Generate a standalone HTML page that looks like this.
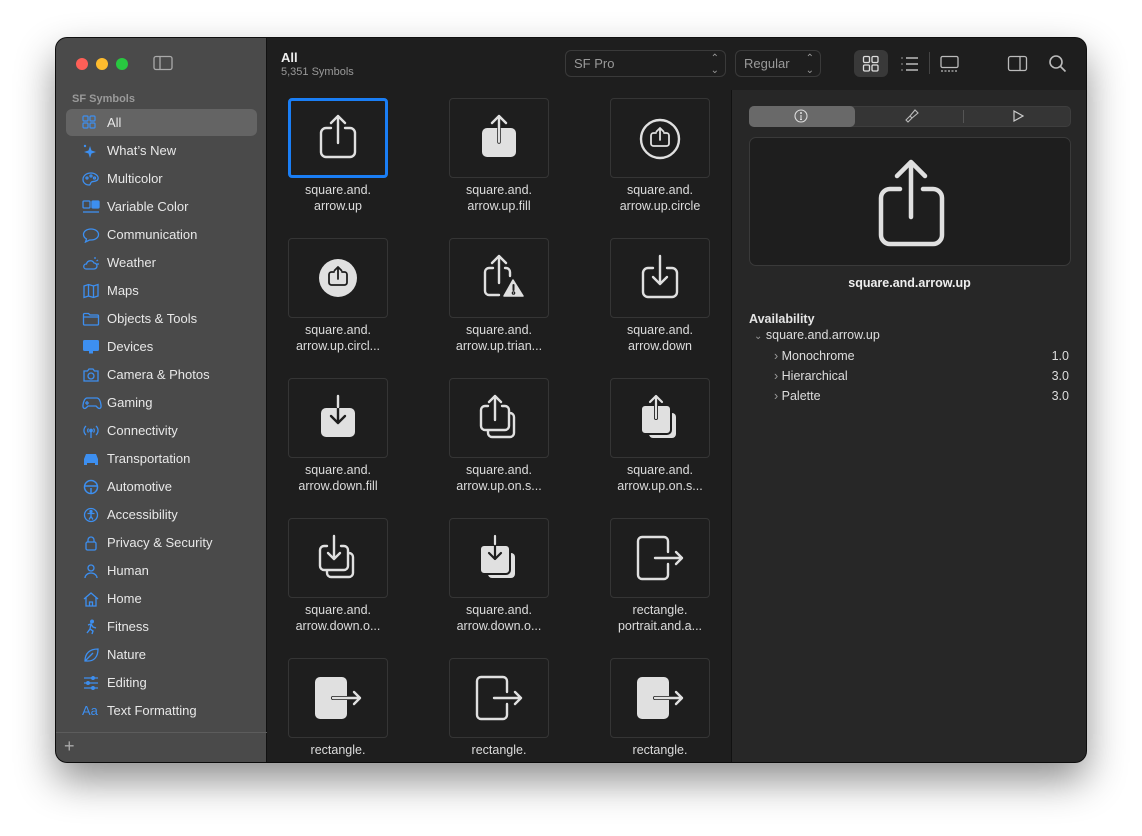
<!DOCTYPE html>
<html><head><meta charset="utf-8"><style>
*{margin:0;padding:0;box-sizing:border-box}
body{width:1142px;height:836px;background:#fff;font-family:"Liberation Sans",sans-serif;position:relative;overflow:hidden}
.win{position:absolute;left:56px;top:38px;width:1030px;height:724px;border-radius:11px;overflow:hidden;background:#1e1e1e;box-shadow:0 18px 40px rgba(0,0,0,.45),0 0 0 1px #111}
.side{position:absolute;left:0;top:0;width:211px;height:724px;background:#4a4a4a;border-right:1px solid #111}
.abs{position:absolute}
.tl{position:absolute;top:20px;width:12px;height:12px;border-radius:50%}
.sec{position:absolute;left:16px;top:55px;font-size:11px;font-weight:bold;color:#9a9a9a}
.item{position:absolute;left:10px;width:191px;height:27px;font-size:13px;color:#e8e8e8;line-height:27px;padding-left:41px}
.item.sel{background:#646464;border-radius:6px}
.item svg{position:absolute;left:16px;top:6px}
.main{position:absolute;left:211px;top:0;width:464px;height:724px;background:#1e1e1e}
.cell{position:absolute;width:100px;height:80px;border:1px solid #353535;border-radius:4px}
.cell svg{position:absolute;left:-1px;top:-1px}
.lbl{position:absolute;width:160px;text-align:center;font-size:12.5px;color:#dcdcdc;line-height:16px}
.right{position:absolute;left:675px;top:52px;width:355px;height:672px;background:#272727;border-left:1px solid #111}
.pop{position:absolute;top:12px;height:27px;border:1px solid #3a3a3a;border-radius:6px;font-size:13px;color:#9a9a9a;line-height:25px;padding-left:8px}
</style></head><body>
<div class="win">
<div class="main">
 <div class="abs" style="left:14px;top:12px;font-size:13px;font-weight:bold;color:#eee">All</div>
 <div class="abs" style="left:14px;top:28px;font-size:11px;color:#999">5,351 Symbols</div>
</div>
<div class="side">
 <div class="tl" style="left:20px;background:#fe5f57"></div>
 <div class="tl" style="left:40px;background:#febc2e"></div>
 <div class="tl" style="left:60px;background:#28c840"></div>
 <svg class="abs" style="left:97px;top:17px" width="20" height="16"><rect x="1" y="1.5" width="18" height="13" rx="2" fill="none" stroke="#aaa" stroke-width="1.3"/><line x1="7" y1="2" x2="7" y2="14" stroke="#aaa" stroke-width="1.3"/></svg>
 <div class="sec">SF Symbols</div>
 <div class="item sel" style="top:71px"><svg width="14" height="14" fill="none" stroke="#3d8ff0" stroke-width="1.2"><rect x="1" y="1" width="5" height="5" rx="1"/><rect x="8" y="1" width="5" height="5" rx="1"/><rect x="1" y="8" width="5" height="5" rx="1"/><rect x="8" y="8" width="5" height="5" rx="1"/></svg>All</div>
 <div class="item" style="top:99px"><svg width="16" height="16" fill="#3d8ff0"><path d="M8 3L9.5 7.5 14 9 9.5 10.5 8 15 6.5 10.5 2 9 6.5 7.5Z"/><circle cx="3" cy="3" r="1.2"/></svg>What’s New</div>
 <div class="item" style="top:127px"><svg width="18" height="16" fill="none" stroke="#3d8ff0" stroke-width="1.3"><path d="M9 2C4 2 1 5 1 8.5S4 14 7 14c2 0 1-2 2.5-3S15 11 16 8 13 2 9 2Z"/><circle cx="5" cy="7" r="1"/><circle cx="9" cy="5" r="1"/><circle cx="12.5" cy="7" r="1"/></svg>Multicolor</div>
 <div class="item" style="top:155px"><svg width="18" height="16" fill="none" stroke="#3d8ff0" stroke-width="1.3"><rect x="1" y="2" width="7" height="7" rx="1"/><rect x="10" y="2" width="7" height="7" rx="1" fill="#3d8ff0"/><line x1="1" y1="13" x2="17" y2="13"/></svg>Variable Color</div>
 <div class="item" style="top:183px"><svg width="18" height="16" fill="none" stroke="#3d8ff0" stroke-width="1.3"><path d="M9 2C4.5 2 1.5 4.5 1.5 7.5c0 2 1.2 3.5 3 4.4L3.5 15 7.5 13C8 13 8.5 13 9 13c4.5 0 7.5-2.5 7.5-5.5S13.5 2 9 2Z"/></svg>Communication</div>
 <div class="item" style="top:211px"><svg width="18" height="16" fill="none" stroke="#3d8ff0" stroke-width="1.3"><path d="M4 14h8a3 3 0 0 0 0-6 4 4 0 0 0-7.5 1A2.5 2.5 0 0 0 4 14Z"/><path d="M13 2v2M16 5l-1.5 1M17 9h-2"/></svg>Weather</div>
 <div class="item" style="top:239px"><svg width="18" height="16" fill="none" stroke="#3d8ff0" stroke-width="1.3"><path d="M2 3l4.5-1.5 5 1.5 4.5-1.5v11.5l-4.5 1.5-5-1.5L2 14.5Z M6.5 1.5v11.5 M11.5 3v11.5"/></svg>Maps</div>
 <div class="item" style="top:267px"><svg width="18" height="16" fill="none" stroke="#3d8ff0" stroke-width="1.3"><path d="M1.5 3.5a1 1 0 0 1 1-1h4l1.5 1.5h7.5a1 1 0 0 1 1 1V13a1 1 0 0 1-1 1h-13a1 1 0 0 1-1-1Z M1.5 6h15"/></svg>Objects &amp; Tools</div>
 <div class="item" style="top:295px"><svg width="18" height="16" fill="#3d8ff0"><rect x="1" y="1" width="16" height="11" rx="1.5"/><rect x="7" y="12" width="4" height="2.5"/></svg>Devices</div>
 <div class="item" style="top:323px"><svg width="18" height="16" fill="none" stroke="#3d8ff0" stroke-width="1.3"><path d="M2 4h3.5l1.5-2h4l1.5 2H16v10H2Z"/><circle cx="9" cy="9" r="3"/></svg>Camera &amp; Photos</div>
 <div class="item" style="top:351px"><svg width="20" height="16" fill="none" stroke="#3d8ff0" stroke-width="1.3"><path d="M5 3h10c2 0 3.5 3 4 7s-2 4-3.5 2.5L14 11H6l-1.5 1.5C3 14 0.5 14 1 10s2-7 4-7Z M5 6v4M3 8h4"/></svg>Gaming</div>
 <div class="item" style="top:379px"><svg width="18" height="16" fill="none" stroke="#3d8ff0" stroke-width="1.3"><path d="M9 8v7M4 3a6 6 0 0 0 0 9M14 3a6 6 0 0 1 0 9M6.5 5.5a3 3 0 0 0 0 4M11.5 5.5a3 3 0 0 1 0 4"/><circle cx="9" cy="7.5" r="1.2" fill="#3d8ff0"/></svg>Connectivity</div>
 <div class="item" style="top:407px"><svg width="18" height="16" fill="#3d8ff0"><path d="M4 3h10l2 5v6h-3v-2H5v2H2V8Z"/></svg>Transportation</div>
 <div class="item" style="top:435px"><svg width="18" height="16" fill="none" stroke="#3d8ff0" stroke-width="1.5"><circle cx="9" cy="8" r="6.5"/><path d="M3 7h12M9 9v5"/></svg>Automotive</div>
 <div class="item" style="top:463px"><svg width="18" height="16" fill="none" stroke="#3d8ff0" stroke-width="1.3"><circle cx="9" cy="8" r="6.5"/><circle cx="9" cy="4.5" r="1" fill="#3d8ff0"/><path d="M5.5 6.5h7M9 6.5v3l-2 3M9 9.5l2 3"/></svg>Accessibility</div>
 <div class="item" style="top:491px"><svg width="18" height="16" fill="none" stroke="#3d8ff0" stroke-width="1.3"><rect x="4" y="7" width="10" height="8" rx="1.5"/><path d="M6 7V5a3 3 0 0 1 6 0v2"/></svg>Privacy &amp; Security</div>
 <div class="item" style="top:519px"><svg width="18" height="16" fill="none" stroke="#3d8ff0" stroke-width="1.3"><circle cx="9" cy="5" r="3"/><path d="M3 15a6 5 0 0 1 12 0"/></svg>Human</div>
 <div class="item" style="top:547px"><svg width="18" height="16" fill="none" stroke="#3d8ff0" stroke-width="1.3"><path d="M2 8l7-6 7 6M4 6.5V15h10V6.5M7.5 15v-4h3v4"/></svg>Home</div>
 <div class="item" style="top:575px"><svg width="18" height="16" fill="none" stroke="#3d8ff0" stroke-width="1.4"><circle cx="10" cy="2.5" r="1.3" fill="#3d8ff0"/><path d="M6 6l3-1 2 3 3 1M9 5l-1 5 3 2-1 3M8 10l-3 4"/></svg>Fitness</div>
 <div class="item" style="top:603px"><svg width="18" height="16" fill="none" stroke="#3d8ff0" stroke-width="1.3"><path d="M3 14C3 6 8 2 16 2c0 8-4 12-10 12ZM3 14l8-8"/></svg>Nature</div>
 <div class="item" style="top:631px"><svg width="18" height="16" fill="none" stroke="#3d8ff0" stroke-width="1.3"><path d="M2 3h14M2 8h14M2 13h14"/><circle cx="11" cy="3" r="1.3"/><circle cx="6" cy="8" r="1.3"/><circle cx="11" cy="13" r="1.3"/></svg>Editing</div>
 <div class="item" style="top:659px"><span style="position:absolute;left:16px;color:#3d8ff0;font-size:13px">Aa</span>Text Formatting</div>
 <div class="abs" style="left:0;top:694px;width:211px;height:1px;background:#5c5c5c"></div>
 <div class="abs" style="left:8px;top:698px;font-size:18px;color:#aaa">+</div>
</div>
<!-- toolbar -->
<div class="pop" style="left:509px;width:161px;color:#999">SF Pro<span style="position:absolute;right:6px;top:0;font-size:10px;line-height:12px;top:2px">⌃<br>⌄</span></div>
<div class="pop" style="left:679px;width:86px">Regular<span style="position:absolute;right:6px;top:2px;font-size:10px;line-height:12px">⌃<br>⌄</span></div>
<div class="abs" style="left:798px;top:12px;width:34px;height:27px;background:#393939;border-radius:6px"></div>
<svg class="abs" style="left:806px;top:17px" width="18" height="18" fill="none" stroke="#ddd" stroke-width="1.3"><rect x="1.5" y="1.5" width="6" height="6" rx="1.2"/><rect x="10" y="1.5" width="6" height="6" rx="1.2"/><rect x="1.5" y="10" width="6" height="6" rx="1.2"/><rect x="10" y="10" width="6" height="6" rx="1.2"/></svg>
<svg class="abs" style="left:844px;top:18px" width="20" height="16" fill="none" stroke="#bbb" stroke-width="1.4"><path d="M6 2h12M6 8h12M6 14h12M1.5 2h1M1.5 8h1M1.5 14h1"/></svg>
<div class="abs" style="left:873px;top:14px;width:1px;height:22px;background:#444"></div>
<svg class="abs" style="left:883px;top:17px" width="22" height="18" fill="none" stroke="#bbb" stroke-width="1.3"><rect x="2" y="1.5" width="17" height="11" rx="1.5"/><path d="M2 16h17" stroke-dasharray="2 1.5"/></svg>
<svg class="abs" style="left:951px;top:17px" width="22" height="17" fill="none" stroke="#bbb" stroke-width="1.3"><rect x="1.5" y="1.5" width="18" height="14" rx="2"/><line x1="13" y1="2" x2="13" y2="15"/></svg>
<svg class="abs" style="left:992px;top:16px" width="20" height="20" fill="none" stroke="#bbb" stroke-width="1.6"><circle cx="8" cy="8" r="6"/><path d="M12.5 12.5l5 5"/></svg>

<div class="main" style="background:transparent;top:0;pointer-events:none">
<!-- row1 -->
<div class="cell" style="left:21px;top:60px;border:3px solid #1a7ef5;"><svg width="100" height="80" style="left:-3px;top:-3px" fill="none" stroke="#e0e0e0" stroke-width="2.4" stroke-linecap="round" stroke-linejoin="round"><path d="M43 30h-5a5 5 0 0 0-5 5v19a5 5 0 0 0 5 5h24a5 5 0 0 0 5-5V35a5 5 0 0 0-5-5h-5M50 45V18M43 25l7-7 7 7"/></svg></div>
<div class="cell" style="left:182px;top:60px"><svg width="100" height="80" stroke-linecap="round" stroke-linejoin="round"><rect x="33" y="30" width="34" height="29" rx="5" fill="#e0e0e0"/><path d="M50 44V18M43 25l7-7 7 7" fill="none" stroke="#e0e0e0" stroke-width="2.4"/><path d="M50 44V31" stroke="#1e1e1e" stroke-width="3.5"/><path d="M50 44V18" stroke="#e0e0e0" stroke-width="2"/></svg></div>
<div class="cell" style="left:343px;top:60px"><svg width="100" height="80" fill="none" stroke="#e0e0e0" stroke-linecap="round" stroke-linejoin="round"><circle cx="50" cy="41" r="19" stroke-width="2.4"/><path d="M46 35h-2.5a2.5 2.5 0 0 0-2.5 2.5v8a2.5 2.5 0 0 0 2.5 2.5h13a2.5 2.5 0 0 0 2.5-2.5v-8a2.5 2.5 0 0 0-2.5-2.5H54M50 42V30M46.5 33.5l3.5-3.5 3.5 3.5" stroke-width="1.8"/></svg></div>
<!-- row2 -->
<div class="cell" style="left:21px;top:200px"><svg width="100" height="80" fill="none" stroke-linecap="round" stroke-linejoin="round"><circle cx="50" cy="40" r="19" fill="#e0e0e0"/><path d="M46 34h-2.5a2.5 2.5 0 0 0-2.5 2.5v8a2.5 2.5 0 0 0 2.5 2.5h13a2.5 2.5 0 0 0 2.5-2.5v-8a2.5 2.5 0 0 0-2.5-2.5H54M50 41V29M46.5 32.5l3.5-3.5 3.5 3.5" stroke="#1e1e1e" stroke-width="1.8"/></svg></div>
<div class="cell" style="left:182px;top:200px"><svg width="100" height="80" fill="none" stroke="#e0e0e0" stroke-width="2.4" stroke-linecap="round" stroke-linejoin="round"><path d="M44 30h-4a4 4 0 0 0-4 4v19a4 4 0 0 0 4 4h10M56 30h1a4 4 0 0 1 4 4v4M50 45V18M43 25l7-7 7 7"/><path d="M64 42l10 16H55Z" fill="#e0e0e0" stroke-width="1.5"/><path d="M64.5 47v5" stroke="#1e1e1e" stroke-width="2"/><circle cx="64.5" cy="55" r=".6" stroke="#1e1e1e"/></svg></div>
<div class="cell" style="left:343px;top:200px"><svg width="100" height="80" fill="none" stroke="#e0e0e0" stroke-width="2.4" stroke-linecap="round" stroke-linejoin="round"><path d="M43 30h-5a5 5 0 0 0-5 5v19a5 5 0 0 0 5 5h24a5 5 0 0 0 5-5V35a5 5 0 0 0-5-5h-5M50 18v28M43 39l7 7 7-7"/></svg></div>
<!-- row3 -->
<div class="cell" style="left:21px;top:340px"><svg width="100" height="80" stroke-linecap="round" stroke-linejoin="round"><rect x="33" y="30" width="34" height="29" rx="5" fill="#e0e0e0"/><path d="M50 18v27M43 38l7 7 7-7" fill="none" stroke="#1e1e1e" stroke-width="2.4"/><path d="M50 18v11" stroke="#e0e0e0" stroke-width="2.4"/></svg></div>
<div class="cell" style="left:182px;top:340px"><svg width="100" height="80" fill="none" stroke="#e0e0e0" stroke-width="2.4" stroke-linecap="round" stroke-linejoin="round"><path d="M39 28h-3a4 4 0 0 0-4 4v16a4 4 0 0 0 4 4h20a4 4 0 0 0 4-4V32a4 4 0 0 0-4-4h-3M46 42V18M40 24l6-6 6 6M60 35h1a4 4 0 0 1 4 4v16a4 4 0 0 1-4 4H43a4 4 0 0 1-4-4v-3"/></svg></div>
<div class="cell" style="left:343px;top:340px"><svg width="100" height="80" stroke-linecap="round" stroke-linejoin="round"><rect x="39" y="35" width="27" height="25" rx="4" fill="#e0e0e0"/><rect x="31" y="27" width="30" height="29" rx="4" fill="#e0e0e0" stroke="#1e1e1e" stroke-width="2"/><path d="M46 40V18" stroke="#1e1e1e" stroke-width="4"/><path d="M46 40V18M40 24l6-6 6 6" fill="none" stroke="#e0e0e0" stroke-width="2.2"/></svg></div>
<!-- row4 -->
<div class="cell" style="left:21px;top:480px"><svg width="100" height="80" fill="none" stroke="#e0e0e0" stroke-width="2.4" stroke-linecap="round" stroke-linejoin="round"><path d="M39 28h-3a4 4 0 0 0-4 4v16a4 4 0 0 0 4 4h20a4 4 0 0 0 4-4V32a4 4 0 0 0-4-4h-3M46 18v23M40 35l6 6 6-6M60 35h1a4 4 0 0 1 4 4v16a4 4 0 0 1-4 4H43a4 4 0 0 1-4-4v-3"/></svg></div>
<div class="cell" style="left:182px;top:480px"><svg width="100" height="80" stroke-linecap="round" stroke-linejoin="round"><rect x="39" y="35" width="27" height="25" rx="4" fill="#e0e0e0"/><rect x="31" y="27" width="30" height="29" rx="4" fill="#e0e0e0" stroke="#1e1e1e" stroke-width="2"/><path d="M46 18v23M40 35l6 6 6-6" fill="none" stroke="#1e1e1e" stroke-width="2.2"/><path d="M46 18v8" stroke="#e0e0e0" stroke-width="2.2"/></svg></div>
<div class="cell" style="left:343px;top:480px"><svg width="100" height="80" fill="none" stroke="#e0e0e0" stroke-width="2.4" stroke-linecap="round" stroke-linejoin="round"><path d="M58 34v-11a4 4 0 0 0-4-4H32a4 4 0 0 0-4 4v34a4 4 0 0 0 4 4h22a4 4 0 0 0 4-4V46M45 40h27M66 34l6 6-6 6"/></svg></div>
<!-- row5 -->
<div class="cell" style="left:21px;top:620px"><svg width="100" height="80" stroke-linecap="round" stroke-linejoin="round"><rect x="27" y="19" width="32" height="42" rx="5" fill="#e0e0e0"/><path d="M45 40h14" stroke="#1e1e1e" stroke-width="4"/><path d="M45 40h27M66 34l6 6-6 6" fill="none" stroke="#e0e0e0" stroke-width="2.4"/></svg></div>
<div class="cell" style="left:182px;top:620px"><svg width="100" height="80" fill="none" stroke="#e0e0e0" stroke-width="2.4" stroke-linecap="round" stroke-linejoin="round"><path d="M58 34v-11a4 4 0 0 0-4-4H32a4 4 0 0 0-4 4v34a4 4 0 0 0 4 4h22a4 4 0 0 0 4-4V46M45 40h27M66 34l6 6-6 6"/></svg></div>
<div class="cell" style="left:343px;top:620px"><svg width="100" height="80" stroke-linecap="round" stroke-linejoin="round"><rect x="27" y="19" width="32" height="42" rx="5" fill="#e0e0e0"/><path d="M45 40h14" stroke="#1e1e1e" stroke-width="4"/><path d="M45 40h27M66 34l6 6-6 6" fill="none" stroke="#e0e0e0" stroke-width="2.4"/></svg></div>
<!-- labels -->
<div class="lbl" style="left:-9px;top:144px">square.and.<br>arrow.up</div>
<div class="lbl" style="left:152px;top:144px">square.and.<br>arrow.up.fill</div>
<div class="lbl" style="left:313px;top:144px">square.and.<br>arrow.up.circle</div>
<div class="lbl" style="left:-9px;top:284px">square.and.<br>arrow.up.circl...</div>
<div class="lbl" style="left:152px;top:284px">square.and.<br>arrow.up.trian...</div>
<div class="lbl" style="left:313px;top:284px">square.and.<br>arrow.down</div>
<div class="lbl" style="left:-9px;top:424px">square.and.<br>arrow.down.fill</div>
<div class="lbl" style="left:152px;top:424px">square.and.<br>arrow.up.on.s...</div>
<div class="lbl" style="left:313px;top:424px">square.and.<br>arrow.up.on.s...</div>
<div class="lbl" style="left:-9px;top:564px">square.and.<br>arrow.down.o...</div>
<div class="lbl" style="left:152px;top:564px">square.and.<br>arrow.down.o...</div>
<div class="lbl" style="left:313px;top:564px">rectangle.<br>portrait.and.a...</div>
<div class="lbl" style="left:-9px;top:704px">rectangle.</div>
<div class="lbl" style="left:152px;top:704px">rectangle.</div>
<div class="lbl" style="left:313px;top:704px">rectangle.</div>
</div>

<div class="right">
 <div class="abs" style="left:17px;top:16px;width:322px;height:21px;background:#353535;border-radius:5px;border:1px solid #3e3e3e"></div>
 <div class="abs" style="left:17px;top:16px;width:106px;height:21px;background:#696969;border-radius:5px"></div>
 <div class="abs" style="left:231px;top:20px;width:1px;height:13px;background:#555"></div>
 <svg class="abs" style="left:62px;top:19px" width="14" height="14" fill="none" stroke="#ddd" stroke-width="1.1"><circle cx="7" cy="7" r="6"/><path d="M7 6v4.5M6 10.5h2"/><circle cx="7" cy="4" r=".5"/></svg>
 <svg class="abs" style="left:171px;top:18px" width="16" height="16" fill="none" stroke="#bbb" stroke-width="1.1"><path d="M7 8l5-6 3 3-6 5ZM7 8l2 2-4 4-2-2Z"/></svg>
 <svg class="abs" style="left:280px;top:19px" width="12" height="14" fill="none" stroke="#ccc" stroke-width="1.2"><path d="M2 2l9 5-9 5Z"/></svg>
 <div class="abs" style="left:17px;top:47px;width:322px;height:129px;background:#1e1e1e;border:1px solid #3a3a3a;border-radius:7px">
  <svg width="322" height="129" fill="none" stroke="#e0e0e0" stroke-width="4.5" stroke-linecap="round" stroke-linejoin="round"><path d="M150 51h-10a9 9 0 0 0-9 9v37a9 9 0 0 0 9 9h43a9 9 0 0 0 9-9V60a9 9 0 0 0-9-9h-10M161 79V24M147 38l14-14 14 14"/></svg>
 </div>
 <div class="abs" style="left:0;top:186px;width:355px;text-align:center;font-size:12.5px;font-weight:bold;color:#eee">square.and.arrow.up</div>
 <div class="abs" style="left:17px;top:222px;font-size:12.5px;font-weight:bold;color:#e5e5e5">Availability</div>
 <div class="abs" style="left:22px;top:238px;font-size:12.5px;color:#ddd"><span style="color:#999;font-size:10px">⌄</span> square.and.arrow.up</div>
 <div class="abs" style="left:42px;top:256px;font-size:12.5px;color:#ddd;line-height:20px"><span style="color:#999">›</span> Monochrome<br><span style="color:#999">›</span> Hierarchical<br><span style="color:#999">›</span> Palette</div>
 <div class="abs" style="right:17px;top:256px;font-size:12.5px;color:#ddd;line-height:20px;text-align:right">1.0<br>3.0<br>3.0</div>
</div>
</div>
</body></html>
